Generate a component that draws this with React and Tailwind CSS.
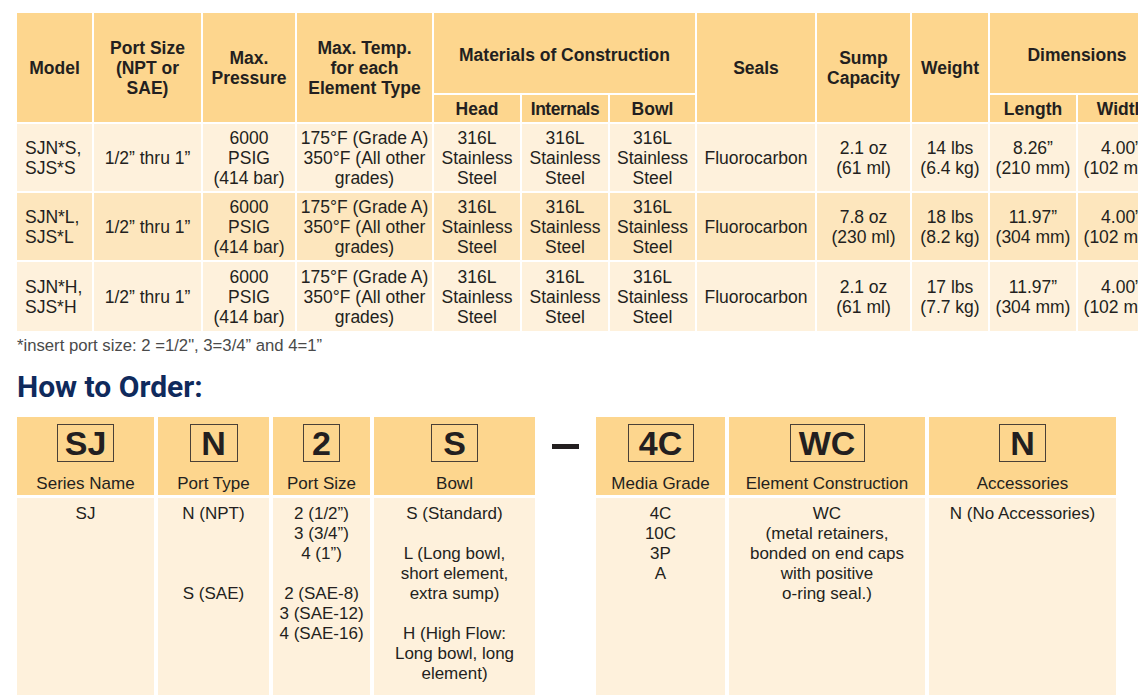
import React from "react";

const Lines = ({ items }) => (
  <>
    {items.map((t, i) => (
      <React.Fragment key={i}>
        {i > 0 && <br />}
        {t}
      </React.Fragment>
    ))}
  </>
);

const specRows = [
  {
    model: ["SJN*S,", "SJS*S"],
    sump: ["2.1 oz", "(61 ml)"],
    weight: ["14 lbs", "(6.4 kg)"],
    length: ["8.26”", "(210 mm)"],
    bg: "bg-[#fef1dc]",
    h: "h-[67px]",
  },
  {
    model: ["SJN*L,", "SJS*L"],
    sump: ["7.8 oz", "(230 ml)"],
    weight: ["18 lbs", "(8.2 kg)"],
    length: ["11.97”", "(304 mm)"],
    bg: "bg-[#fde6bd]",
    h: "h-[67px]",
  },
  {
    model: ["SJN*H,", "SJS*H"],
    sump: ["2.1 oz", "(61 ml)"],
    weight: ["17 lbs", "(7.7 kg)"],
    length: ["11.97”", "(304 mm)"],
    bg: "bg-[#fef1dc]",
    h: "h-[69px]",
  },
];

const steel = ["316L", "Stainless", "Steel"];

function SpecTable() {
  const th = "bg-[#fdd68e] p-0 text-center align-middle font-bold";
  return (
    <table className="ml-[15px] mt-[11px] w-[1151px] min-w-[1151px] table-fixed border-separate border-spacing-[2px] text-[17.5px] leading-[20px] text-[#231f20]">
      <colgroup>
        <col className="w-[75px]" />
        <col className="w-[107px]" />
        <col className="w-[92px]" />
        <col className="w-[135px]" />
        <col className="w-[86px]" />
        <col className="w-[86px]" />
        <col className="w-[85px]" />
        <col className="w-[118px]" />
        <col className="w-[93px]" />
        <col className="w-[76px]" />
        <col className="w-[86px]" />
        <col className="w-[86px]" />
      </colgroup>
      <thead>
        <tr className="h-[80px]">
          <th rowSpan={2} className={th}>Model</th>
          <th rowSpan={2} className={th}>
            <Lines items={["Port Size", "(NPT or", "SAE)"]} />
          </th>
          <th rowSpan={2} className={th}>
            <Lines items={["Max.", "Pressure"]} />
          </th>
          <th rowSpan={2} className={th}>
            <Lines items={["Max. Temp.", "for each", "Element Type"]} />
          </th>
          <th colSpan={3} className={`${th} pt-[3px]`}>Materials of Construction</th>
          <th rowSpan={2} className={th}>Seals</th>
          <th rowSpan={2} className={th}>
            <Lines items={["Sump", "Capacity"]} />
          </th>
          <th rowSpan={2} className={th}>Weight</th>
          <th colSpan={2} className={`${th} pt-[3px]`}>Dimensions</th>
        </tr>
        <tr className="h-[27px]">
          <th className={th}>Head</th>
          <th className={`${th} tracking-[-0.5px]`}>Internals</th>
          <th className={th}>Bowl</th>
          <th className={th}>Length</th>
          <th className={th}>Width</th>
        </tr>
      </thead>
      <tbody>
        {specRows.map((r, i) => {
          const td = `${r.bg} p-0 text-center align-middle`;
          return (
            <tr key={i} className={r.h}>
              <td className={`${r.bg} p-0 pl-[8px] text-left align-middle`}>
                <Lines items={r.model} />
              </td>
              <td className={td}>1/2” thru 1”</td>
              <td className={td}>
                <Lines items={["6000", "PSIG", "(414 bar)"]} />
              </td>
              <td className={td}>
                <Lines items={["175°F (Grade A)", "350°F (All other", "grades)"]} />
              </td>
              <td className={td}>
                <Lines items={steel} />
              </td>
              <td className={td}>
                <Lines items={steel} />
              </td>
              <td className={td}>
                <Lines items={steel} />
              </td>
              <td className={td}>Fluorocarbon</td>
              <td className={td}>
                <Lines items={r.sump} />
              </td>
              <td className={td}>
                <Lines items={r.weight} />
              </td>
              <td className={td}>
                <Lines items={r.length} />
              </td>
              <td className={td}>
                <Lines items={["4.00”", "(102 mm)"]} />
              </td>
            </tr>
          );
        })}
      </tbody>
    </table>
  );
}

function CodeHead({ code, w, label }) {
  return (
    <div className="flex flex-col items-center bg-[#fdd68e] pt-[7px]">
      <div
        className={`${w} flex h-[38px] items-center justify-center border border-[#4a4036] text-[34px] font-bold leading-[36px] text-[#231f20]`}
      >
        {code}
      </div>
      <div className="mt-[12px] whitespace-nowrap text-[17px] leading-[20px] text-[#231f20]">
        {label}
      </div>
    </div>
  );
}

function CodeBody({ lines }) {
  return (
    <div className="bg-[#fef1dc] pt-[6px] text-center text-[17px] leading-[20px] text-[#231f20]">
      {lines.map((t, i) => (
        <div key={i} className="h-[20px] whitespace-nowrap">
          {t}
        </div>
      ))}
    </div>
  );
}

function OrderGrid() {
  return (
    <div className="ml-[17px] mt-[12px] grid grid-cols-[137px_111px_97px_161px_53px_129px_196px_187px] grid-rows-[78px_197px] gap-x-[4px] gap-y-[3px]">
      <CodeHead code="SJ" w="w-[57px]" label="Series Name" />
      <CodeHead code="N" w="w-[48px]" label="Port Type" />
      <CodeHead code="2" w="w-[37px]" label="Port Size" />
      <CodeHead code="S" w="w-[47px]" label="Bowl" />
      <div className="flex justify-center">
        <div className="mt-[27px] h-[5px] w-[27px] bg-[#231f20]" />
      </div>
      <CodeHead code="4C" w="w-[66px]" label="Media Grade" />
      <CodeHead code="WC" w="w-[75px]" label="Element Construction" />
      <CodeHead code="N" w="w-[47px]" label="Accessories" />

      <CodeBody lines={["SJ"]} />
      <CodeBody lines={["N (NPT)", "", "", "", "S (SAE)"]} />
      <CodeBody
        lines={["2 (1/2”)", "3 (3/4”)", "4 (1”)", "", "2 (SAE-8)", "3 (SAE-12)", "4 (SAE-16)"]}
      />
      <CodeBody
        lines={[
          "S (Standard)",
          "",
          "L (Long bowl,",
          "short element,",
          "extra sump)",
          "",
          "H (High Flow:",
          "Long bowl, long",
          "element)",
        ]}
      />
      <div />
      <CodeBody lines={["4C", "10C", "3P", "A"]} />
      <CodeBody
        lines={[
          "WC",
          "(metal retainers,",
          "bonded on end caps",
          "with positive",
          "o-ring seal.)",
        ]}
      />
      <CodeBody lines={["N (No Accessories)"]} />
    </div>
  );
}

export default function App() {
  return (
    <div className="h-[695px] w-[1138px] overflow-hidden bg-white font-['Liberation_Sans',Arial,sans-serif]">
      <SpecTable />
      <p className="ml-[17px] mt-[3px] text-[16.7px] leading-[20px] text-[#4a4a4a]">
        *insert port size: 2 =1/2", 3=3/4” and 4=1”
      </p>
      <h2 className="ml-[17px] mt-[13px] font-['Roboto',sans-serif] text-[30px] font-bold leading-[36px] text-[#0f2a5c]">
        How to Order:
      </h2>
      <OrderGrid />
    </div>
  );
}
